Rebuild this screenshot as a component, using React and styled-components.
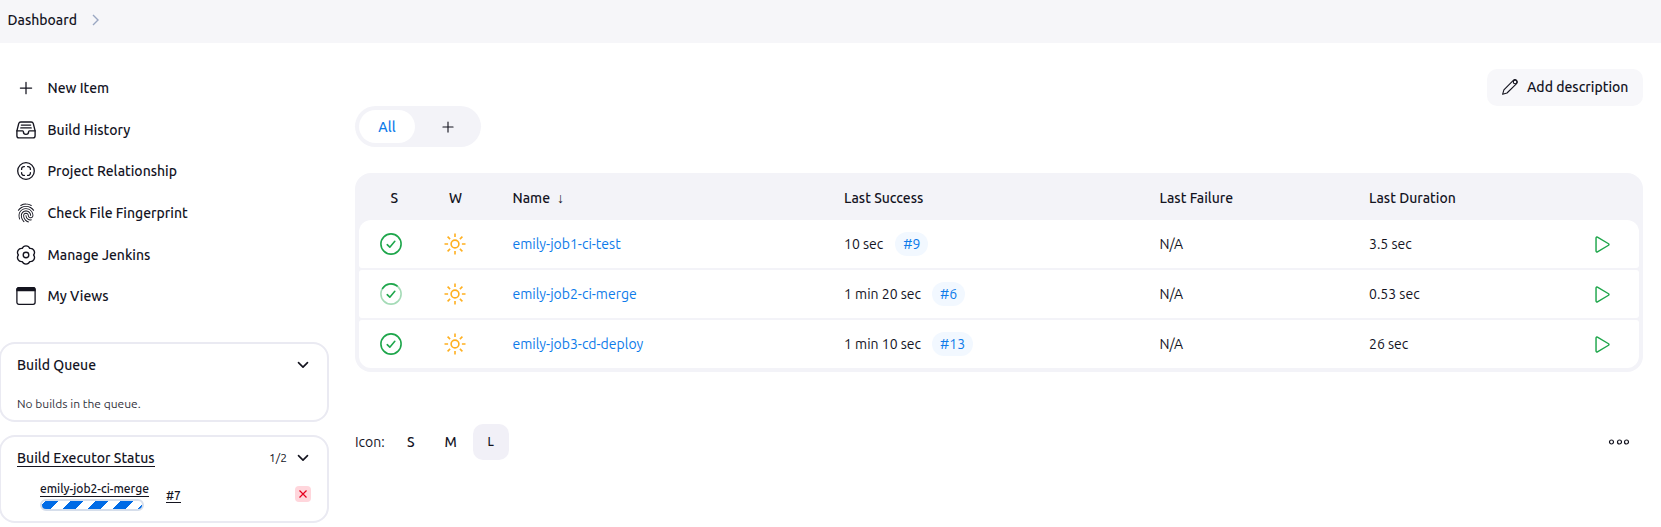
import React from "react";
import styled, { createGlobalStyle, css } from "styled-components";
import { IoAdd, IoFingerPrintOutline, IoPlayOutline } from "react-icons/io5";

const Global = createGlobalStyle`
  * { box-sizing: border-box; }
  body {
    margin: 0;
    background: #fff;
    color: #14141f;
    font: 400 14px/20px Ubuntu, "Noto Sans", "Open Sans", sans-serif;
    overflow: hidden;
  }
`;

const Page = styled.div`
  height: 527px;
  display: flex;
  flex-direction: column;
`;
const Text = styled.span`
  font-size: ${(p) => p.$size || 14}px;
  font-weight: ${(p) => (p.$medium ? 500 : 400)};
  color: ${(p) => p.$color || "inherit"};
  white-space: nowrap;
`;
const Breadcrumbs = styled.header`
  height: 43px;
  flex: none;
  background: #f6f6f9;
  padding: 0 7.5px 3px;
  display: flex;
  align-items: center;
  gap: 15px;
`;
const Body = styled.div`
  display: flex;
  flex: 1;
  min-height: 0;
`;
const Sidebar = styled.aside`
  width: 329px;
  flex: none;
  padding-top: 24px;
`;
const Tasks = styled.nav`
  height: 250px;
  margin-bottom: 25px;
  display: flex;
  flex-direction: column;
`;
const Task = styled.a`
  flex: 1;
  padding-left: 16px;
  display: flex;
  align-items: center;
  gap: 11.5px;
  svg { width: 20px; height: 20px; flex: none; }
`;
const Card = styled.section`
  width: 330px;
  height: ${(p) => p.$height}px;
  margin: 0 0 13px -1px;
  border: 2px solid #eaeaf2;
  border-radius: 16px;
  padding: 0 16px;
`;
const CardHead = styled.div`
  height: 42px;
  display: flex;
  align-items: center;
  gap: 10px;
  svg { margin-right: 2px; }
`;
const Spacer = styled.span`
  flex: 1;
`;
const QueueText = styled.div`
  display: flex;
  height: 36px;
  align-items: center;
`;
const UnderLink = styled(Text)`
  border-bottom: 1px solid #14141f;
  line-height: ${(p) => p.$lh}px;
`;
const ExecRow = styled.div`
  display: flex;
  padding-left: 23px;
`;
const Job = styled.div`
  display: flex;
  flex-direction: column;
  align-items: flex-start;
  gap: 2px;
  width: 126px;
  padding-top: 3px;
`;
const BuildLink = styled.div`
  padding-top: 9px;
  line-height: 14px;
`;
const Progress = styled.div`
  width: 104px;
  height: 12px;
  border: 2px solid #d6deeb;
  border-radius: 6px;
  background: repeating-linear-gradient(
    135deg,
    #fff 0 2.8px,
    #006be6 2.8px 11.64px,
    #fff 11.64px 17.68px
  );
`;
const Stop = styled.button`
  width: 16px;
  height: 16px;
  margin-top: 7px;
  border: 0;
  padding: 0;
  border-radius: 4px;
  background: #ffd6dc;
  color: #e6001f;
  display: grid;
  place-items: center;
`;
const Main = styled.main`
  flex: 1;
  padding: 26px 18px 0 26px;
`;
const ActionBar = styled.div`
  display: flex;
  justify-content: flex-end;
`;
const DescriptionButton = styled.button`
  width: 156px;
  height: 37px;
  border: 0;
  border-radius: 10px;
  background: #f7f7fa;
  color: inherit;
  font: inherit;
  padding: 0 0 1px 14px;
  display: flex;
  align-items: center;
  gap: 8px;
`;
const Tabs = styled.div`
  width: 126px;
  height: 41px;
  padding: 4px;
  border-radius: 21px;
  background: #f3f3f8;
  display: flex;
`;
const Tab = styled.div`
  width: ${(p) => p.$width}px;
  flex: none;
  border-radius: 17px;
  background: ${(p) => (p.$active ? "#fff" : "transparent")};
  display: flex;
  align-items: center;
  justify-content: center;
`;
const Table = styled.div`
  margin-top: 26px;
  height: 199px;
  padding: 0 4px 4px;
  border-radius: 16px;
  background: #f3f3f8;
  display: flex;
  flex-direction: column;
  gap: 2px;
`;
const columns = css`
  display: grid;
  grid-template-columns: 64px 89.5px 331.5px 315.5px 209.5px 200px 1fr;
  align-items: center;
`;
const TableHead = styled.div`
  ${columns}
  height: 45px;
  padding-top: 4px;
`;
const Row = styled.div`
  ${columns}
  height: 48px;
  background: #fff;
  border-radius: 3px;
  &:nth-child(2) { border-radius: 12px 12px 3px 3px; }
  &:last-child { border-radius: 3px 3px 12px 12px; }
`;
const Cell = styled.div`
  display: flex;
  align-items: center;
  padding-left: ${(p) => p.$pad || 0}px;
  gap: ${(p) => p.$gap || 0}px;
  ${(p) => p.$end && css`justify-content: flex-end; padding-right: 25px;`}
`;
const Build = styled.span`
  width: ${(p) => p.$width}px;
  height: 24px;
  border-radius: 12px;
  background: #f2f8ff;
  display: flex;
  align-items: center;
  justify-content: center;
`;
const Footer = styled.div`
  height: 36px;
  margin-top: 52px;
  padding-right: 13px;
  display: flex;
  align-items: center;
`;
const SizeButton = styled.span`
  width: 36px;
  height: 36px;
  margin-left: ${(p) => p.$ml || 0}px;
  border-radius: 10px;
  background: ${(p) => (p.$active ? "#f1f0f7" : "transparent")};
  display: grid;
  place-items: center;
`;

const BLUE = "#0d7bea";

const Chevron = () => (
  <svg width="12" height="12" viewBox="0 0 12 12" fill="none" stroke="#14141f" strokeWidth="1.6" strokeLinecap="round" strokeLinejoin="round">
    <path d="M1.500 3.600 6 8.100l4.500-4.500" />
  </svg>
);
const Tray = () => (
  <svg viewBox="0 0 20 20" fill="none" stroke="currentColor" strokeWidth="1.350" strokeLinecap="round" strokeLinejoin="round">
    <path d="M.9 10.800 2.700 3.600A2.200 2.200 0 0 1 4.800 2h10.400a2.200 2.200 0 0 1 2.100 1.600l1.800 7.200v4.900a2.200 2.200 0 0 1-2.200 2.200H3.100a2.200 2.200 0 0 1-2.200-2.200z" />
    <path d="M.9 10.800h5.700c.6 0 .8.500.8 1a2.600 2.600 0 0 0 5.200 0c0-.5.2-1 .8-1h5.700M5.400 5.100h9.200M4.800 7.900h10.400" />
  </svg>
);
const Relationship = () => (
  <svg viewBox="0 0 20 20" fill="none" stroke="currentColor" strokeWidth="1.3" strokeLinecap="round">
    <circle cx="10" cy="10" r="8.300" />
    <path d="M5.600 8.400V8A2.400 2.400 0 0 1 8 5.600h.4M11.600 5.600h.4A2.400 2.400 0 0 1 14.400 8v.4M14.400 11.600v.4a2.400 2.400 0 0 1-2.400 2.400h-.4M8.400 14.400H8A2.400 2.400 0 0 1 5.600 12v-.4" />
  </svg>
);
const Gear = () => (
  <svg viewBox="0 0 20 20" fill="none" stroke="currentColor" strokeWidth="1.350" strokeLinejoin="round">
    <path d="M6.200 3.420a4.100 4.100 0 0 1 7.600 0A4.100 4.100 0 0 1 17.600 10A4.100 4.100 0 0 1 13.800 16.580A4.100 4.100 0 0 1 6.200 16.580A4.100 4.100 0 0 1 2.400 10A4.100 4.100 0 0 1 6.200 3.420z" />
    <circle cx="10" cy="10" r="2.800" />
  </svg>
);
const Window = () => (
  <svg viewBox="0 0 20 20" fill="none" stroke="currentColor" strokeWidth="1.3">
    <rect x="0.900" y="1.650" width="18.200" height="16.700" rx="2" />
    <path d="M1 4V3.400A1.800 1.800 0 0 1 2.800 1.600h14.400A1.800 1.800 0 0 1 19 3.400V4.600H1z" fill="currentColor" />
  </svg>
);
const Pencil = () => (
  <svg width="18" height="18" viewBox="0 0 18 18" fill="none" stroke="currentColor" strokeWidth="1.1" strokeLinejoin="round">
    <path d="M1.600 16.300 2.900 11.900 12.300 2.300a2.150 2.150 0 0 1 3.300 3.300L6 15z" />
    <circle cx="14.100" cy="3.900" r="1.800" />
  </svg>
);
const Sun = () => (
  <svg width="22" height="22" viewBox="0 0 22 22" fill="none" stroke="#ffb020" strokeWidth="1.600">
    <circle cx="11" cy="11" r="3.900" />
    <path d="M11 .5v3.600M11 17.900v3.600M.5 11h3.600M17.900 11h3.600M3.600 3.600l2.500 2.500M15.900 15.900l2.500 2.500M3.600 18.400l2.500-2.500M15.900 6.100l2.500-2.500" />
  </svg>
);
const Status = ({ running }) => (
  <svg width="22" height="22" viewBox="0 0 22 22" fill="none" stroke="#1ea64b" strokeWidth="1.600" strokeLinecap="round" strokeLinejoin="round">
    <circle cx="11" cy="11" r="10.100" opacity={running ? 0.4 : 1} />
    {running && <path d="M2.600 5.400A10.100 10.100 0 0 1 17 2.900" />}
    <path d="m7.200 11.700 2.600 2.500 5-5.900" />
  </svg>
);

const TASKS = [
  ["New Item", IoAdd],
  ["Build History", Tray],
  ["Project Relationship", Relationship],
  ["Check File Fingerprint", IoFingerPrintOutline],
  ["Manage Jenkins", Gear],
  ["My Views", Window],
];
const JOBS = [
  { name: "emily-job1-ci-test", success: "10 sec", gap: 12, build: "#9", pill: 33, duration: "3.5 sec" },
  { name: "emily-job2-ci-merge", success: "1 min 20 sec", gap: 11, build: "#6", pill: 33, duration: "0.53 sec", running: true },
  { name: "emily-job3-cd-deploy", success: "1 min 10 sec", gap: 11, build: "#13", pill: 41, duration: "26 sec" },
];

export default function App() {
  return (
    <Page>
      <Global />
      <Breadcrumbs>
        <Text $medium>Dashboard</Text>
        <svg width="8" height="12" viewBox="0 0 8 12" fill="none" stroke="#9aa7c2" strokeWidth="1.400"><path d="m1 1 5 5-5 5" /></svg>
      </Breadcrumbs>
      <Body>
        <Sidebar>
          <Tasks>
            {TASKS.map(([label, Icon]) => (
              <Task key={label}><Icon /><Text $medium>{label}</Text></Task>
            ))}
          </Tasks>
          <Card $height={80}>
            <CardHead><Text $medium>Build Queue</Text><Spacer /><Chevron /></CardHead>
            <QueueText><Text $size={12} $color="#333340">No builds in the queue.</Text></QueueText>
          </Card>
          <Card $height={88}>
            <CardHead><UnderLink $medium $lh={16}>Build Executor Status</UnderLink><Spacer /><Text $size={12}>1/2</Text><Chevron /></CardHead>
            <ExecRow>
              <Job><UnderLink $size={12} $medium $lh={14}>emily-job2-ci-merge</UnderLink><Progress /></Job>
              <BuildLink><UnderLink $size={12} $medium $lh={14}>#7</UnderLink></BuildLink>
              <Spacer />
              <Stop><svg width="10" height="10" viewBox="0 0 10 10" stroke="currentColor" strokeWidth="1.2"><path d="m1.500 1.500 7 7M8.500 1.500l-7 7" /></svg></Stop>
            </ExecRow>
          </Card>
        </Sidebar>
        <Main>
          <ActionBar><DescriptionButton><Pencil /><Text $medium>Add description</Text></DescriptionButton></ActionBar>
          <Tabs>
            <Tab $active $width={56}><Text $medium $color={BLUE}>All</Text></Tab>
            <Tab $width={66}><IoAdd size={18} /></Tab>
          </Tabs>
          <Table>
            <TableHead>
              <Cell $pad={31.5}><Text $medium>S</Text></Cell>
              <Cell $pad={26}><Text $medium>W</Text></Cell>
              <Cell $gap={7}><Text $medium>Name</Text><Text>↓</Text></Cell>
              <Cell><Text $medium>Last Success</Text></Cell>
              <Cell><Text $medium>Last Failure</Text></Cell>
              <Cell><Text $medium>Last Duration</Text></Cell>
            </TableHead>
            {JOBS.map((j) => (
              <Row key={j.name}>
                <Cell $pad={21}><Status running={j.running} /></Cell>
                <Cell $pad={21}><Sun /></Cell>
                <Cell><Text $color={BLUE}>{j.name}</Text></Cell>
                <Cell $gap={j.gap}><Text>{j.success}</Text><Build $width={j.pill}><Text $color={BLUE}>{j.build}</Text></Build></Cell>
                <Cell><Text>N/A</Text></Cell>
                <Cell><Text>{j.duration}</Text></Cell>
                <Cell $end><IoPlayOutline size={23} color="#1ea64b" /></Cell>
              </Row>
            ))}
          </Table>
          <Footer>
            <Text>Icon:</Text>
            <SizeButton $ml={8}><Text $medium>S</Text></SizeButton>
            <SizeButton $ml={4}><Text $medium>M</Text></SizeButton>
            <SizeButton $ml={4} $active><Text $medium $size={12}>L</Text></SizeButton>
            <Spacer />
            <svg width="22" height="8" viewBox="0 0 22 8" fill="none" stroke="#14141f" strokeWidth="1.200"><circle cx="3.500" cy="4" r="2" /><circle cx="11.500" cy="4" r="2" /><circle cx="18.500" cy="4" r="2" /></svg>
          </Footer>
        </Main>
      </Body>
    </Page>
  );
}
